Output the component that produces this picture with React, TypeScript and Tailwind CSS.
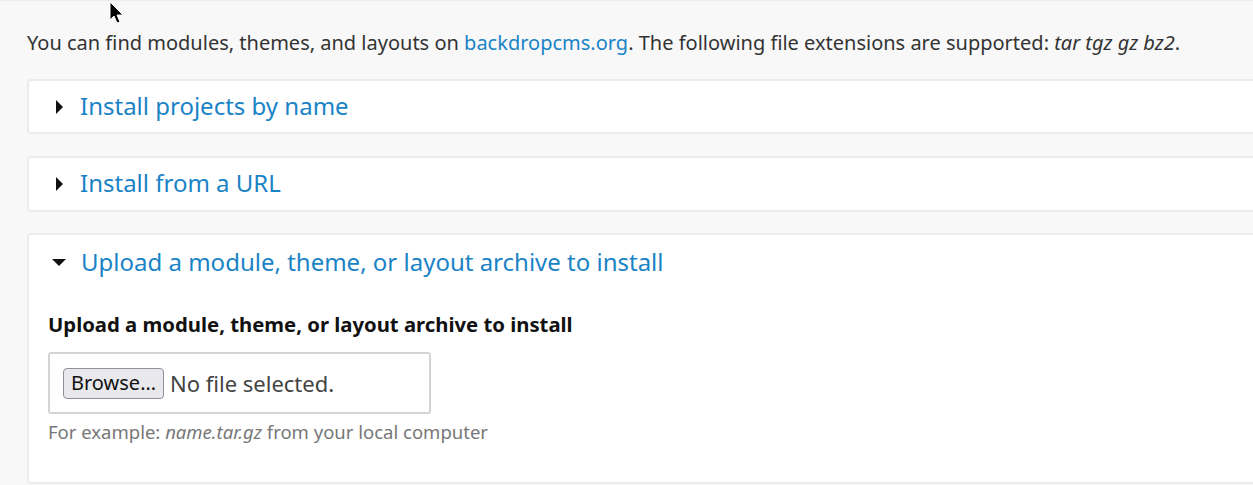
import React from "react";

function Caret({ open }: { open?: boolean }) {
  return open ? (
    <svg width="14" height="8" viewBox="0 0 14 8" className="shrink-0">
      <polygon points="0,0 14,0 7,7" fill="#111" />
    </svg>
  ) : (
    <svg width="8" height="14" viewBox="0 0 8 14" className="shrink-0">
      <polygon points="0,0 7,7 0,14" fill="#111" />
    </svg>
  );
}

export default function App() {
  return (
    <div
      className="relative w-[1253px] h-[485px] overflow-hidden bg-[#f8f8f8] border-t border-[#ececec] text-[#333]"
      style={{ fontFamily: '"Noto Sans", "Open Sans", sans-serif' }}
    >
      <div className="w-[1280px] pl-[27px] pt-[27px]">
        <p className="text-[20px] leading-[30px] text-[#333]">
          You can find modules, themes, and layouts on{" "}
          <a className="text-[#1a83c6]">backdropcms.org</a>. The following file
          extensions are supported: <em>tar tgz gz bz2</em>.
        </p>

        <div className="mt-[21px] flex flex-col">
          <div className="h-[55px] bg-white border-2 border-[#ebebeb] rounded-[4px] flex items-center pl-[27px] gap-[16px]">
            <Caret />
            <span className="text-[24px] text-[#1a83c6] leading-[30px] -mt-[2px]">
              Install projects by name
            </span>
          </div>

          <div className="mt-[22px] h-[56px] bg-white border-2 border-[#ebebeb] rounded-[4px] flex items-center pl-[27px] gap-[16px]">
            <Caret />
            <span className="text-[24px] text-[#1a83c6] leading-[30px] -mt-[2px]">
              Install from a URL
            </span>
          </div>

          <div className="mt-[21px] h-[251px] bg-white border-2 border-[#ebebeb] rounded-[4px] pl-[19px]">
            <div className="flex items-center h-[56px] pl-[4px] gap-[15px]">
              <Caret open />
              <span className="text-[24px] text-[#1a83c6] leading-[30px] -mt-[2px]">
                Upload a module, theme, or layout archive to install
              </span>
            </div>
            <div className="mt-[21px] text-[20.3px] font-bold text-[#111] leading-[24px]">
              Upload a module, theme, or layout archive to install
            </div>
            <div className="mt-[16px] w-[383px] h-[62px] border-2 border-[#d4d4d4] rounded-[3px] flex items-center pl-[13px] gap-[6px]">
              <span className="h-[31px] px-[7px] flex items-center bg-[#e9e9ed] border border-[#8f8f9d] rounded-[4px] text-[20px] text-[#111]">
                Browse…
              </span>
              <span className="text-[22px] text-[#444]">No file selected.</span>
            </div>
            <div className="mt-[6px] text-[18.5px] text-[#777] leading-[24px]">
              For example: <em>name.tar.gz</em> from your local computer
            </div>
          </div>
        </div>
      </div>

      <svg
        className="absolute left-[108px] top-[0px]"
        width="18"
        height="26"
        viewBox="0 0 18 26"
      >
        <path
          d="M2 1 L2 19 L6 15 L9 22 L12 21 L9 14 L15 14 Z"
          fill="#000"
          stroke="#fff"
          strokeWidth="1"
        />
      </svg>
    </div>
  );
}
